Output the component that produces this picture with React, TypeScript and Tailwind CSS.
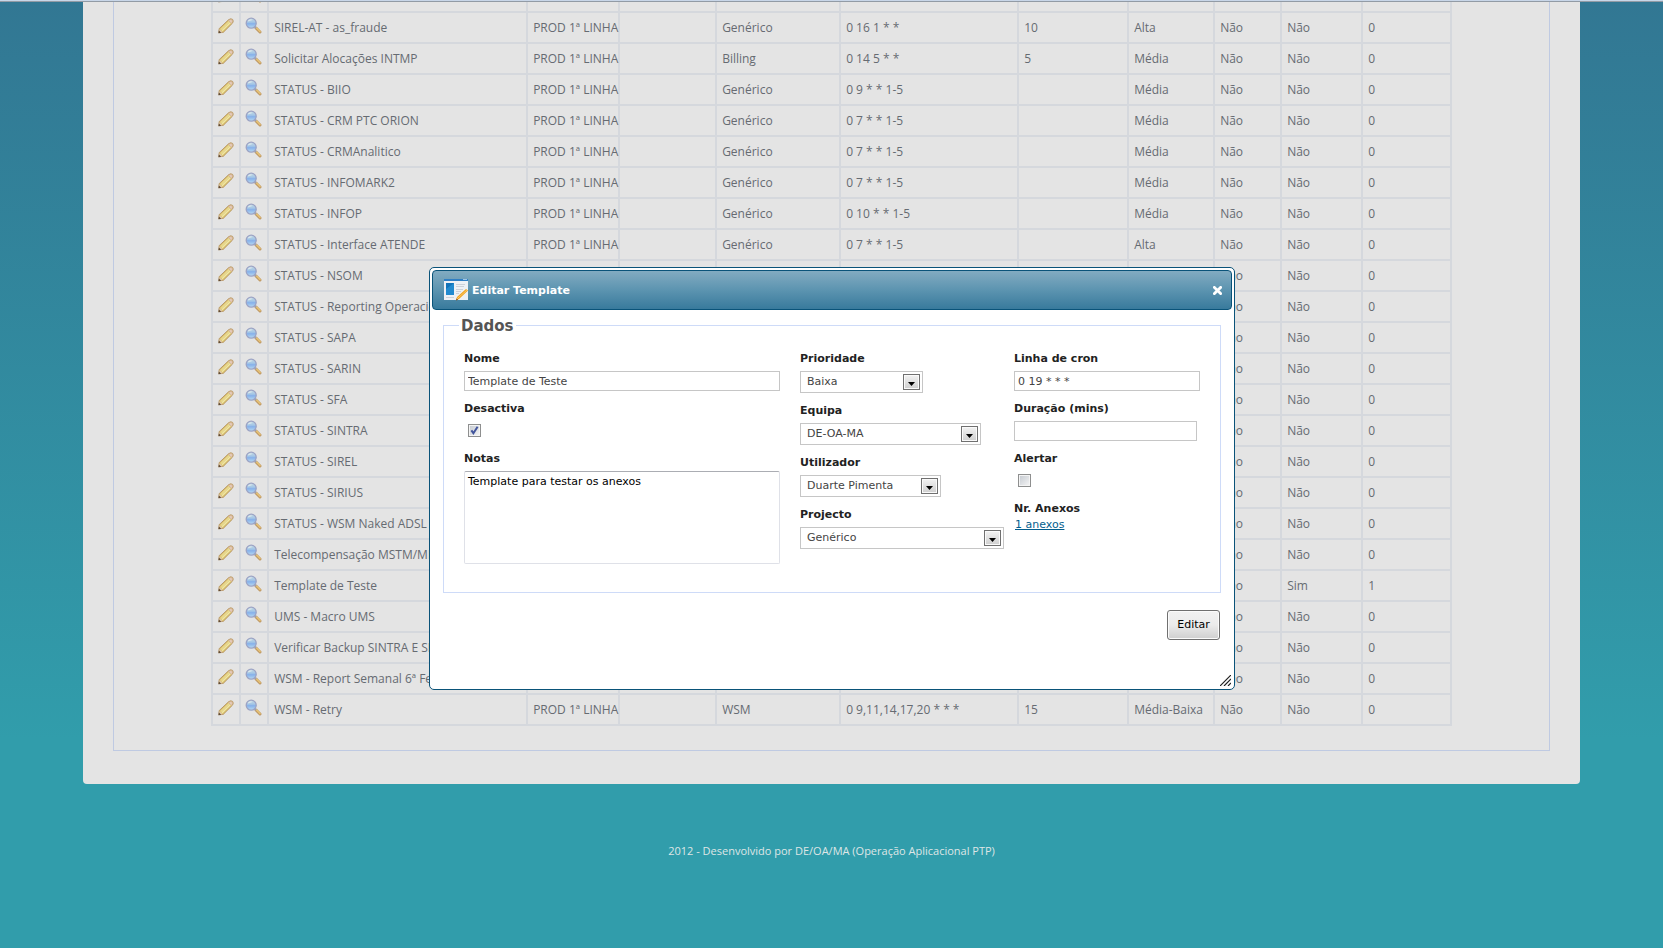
import { useState, type ReactNode } from 'react'

type Row = {
  name: string
  team: string
  project: string
  cron: string
  duration: string
  priority: string
  disabled: string
  alert: string
  attachments: string
}

const TEAM = 'PROD 1ª LINHA'

function row(name: string, project = '', cron = '', priority = '', duration = '', alert = 'Não', attachments = '0'): Row {
  return { name, team: TEAM, project, cron, duration, priority, disabled: 'Não', alert, attachments }
}

const rows: Row[] = [
  row('SIREL-AT - as_fraude', 'Genérico', '0 16 1 * *', 'Alta', '10'),
  row('Solicitar Alocações INTMP', 'Billing', '0 14 5 * *', 'Média', '5'),
  row('STATUS - BIIO', 'Genérico', '0 9 * * 1-5', 'Média'),
  row('STATUS - CRM PTC ORION', 'Genérico', '0 7 * * 1-5', 'Média'),
  row('STATUS - CRMAnalitico', 'Genérico', '0 7 * * 1-5', 'Média'),
  row('STATUS - INFOMARK2', 'Genérico', '0 7 * * 1-5', 'Média'),
  row('STATUS - INFOP', 'Genérico', '0 10 * * 1-5', 'Média'),
  row('STATUS - Interface ATENDE', 'Genérico', '0 7 * * 1-5', 'Alta'),
  row('STATUS - NSOM'),
  row('STATUS - Reporting Operacional'),
  row('STATUS - SAPA'),
  row('STATUS - SARIN'),
  row('STATUS - SFA'),
  row('STATUS - SINTRA'),
  row('STATUS - SIREL'),
  row('STATUS - SIRIUS'),
  row('STATUS - WSM Naked ADSL'),
  row('Telecompensação MSTM/ME'),
  row('Template de Teste', 'Genérico', '0 19 * * *', 'Baixa', '', 'Sim', '1'),
  row('UMS - Macro UMS'),
  row('Verificar Backup SINTRA E SI'),
  row('WSM - Report Semanal 6ª Feira'),
  row('WSM - Retry', 'WSM', '0 9,11,14,17,20 * * *', 'Média-Baixa', '15'),
]

function PencilIcon() {
  return (
    <svg width="16" height="16" viewBox="0 0 16 16" aria-hidden="true">
      <path d="M0.8 14.8 1.2 10.6 10.8 1.6Q12.8 0.2 14.6 1.4Q15.8 3 14.6 5L5.2 14.4Z" fill="#dcc46c" stroke="#b8986a" strokeWidth="1" />
      <path d="M2.8 11.6 12 2.8" stroke="#e9da96" strokeWidth="1.2" />
      <path d="M4 12.8 13 4" stroke="#efe7a8" strokeWidth="1.2" />
      <path d="M10.4 2.4Q12.8 0.8 14.2 1.8Q15.2 3.2 13.6 5.6Z" fill="#e3c9b8" stroke="#cda98a" strokeWidth="0.6" />
      <path d="M1 14.6 1.6 11.2 4.8 14.2Z" fill="#e0c8ae" />
      <path d="M0.4 15.2 0.9 12.4 3.2 14.8Z" fill="#5f4a36" />
    </svg>
  )
}

function MagnifierIcon() {
  return (
    <svg width="17" height="17" viewBox="0 0 17 17" aria-hidden="true">
      <defs>
        <linearGradient id="lens" x1="0" y1="0" x2="0" y2="1">
          <stop offset="0" stopColor="#c4d8e2" />
          <stop offset="0.4" stopColor="#a3c6e6" />
          <stop offset="0.55" stopColor="#86b0ea" />
          <stop offset="1" stopColor="#b8dcf2" />
        </linearGradient>
      </defs>
      <path d="M11 11 15 15" stroke="#c09a66" strokeWidth="3" strokeLinecap="round" />
      <path d="M11.4 10.8 15 14.4" stroke="#e8c474" strokeWidth="1.4" strokeLinecap="round" />
      <path d="M9.4 9.4 11 11" stroke="#9aa0b0" strokeWidth="2" />
      <circle cx="6.2" cy="6.2" r="5" fill="url(#lens)" stroke="#9ca3c4" strokeWidth="1.3" />
      <path d="M3.2 4.2Q4.6 2.6 6.6 2.8" fill="none" stroke="#dde8ec" strokeWidth="1.2" />
    </svg>
  )
}

function TemplateIcon() {
  return (
    <svg width="24" height="22" viewBox="0 0 24 22" aria-hidden="true">
      <rect width="24" height="21" fill="#eef1f5" />
      <rect width="24" height="2" fill="#2f7fc4" />
      <rect x="19" y="0" width="4" height="1" fill="#9cc6ea" />
      <rect x="2" y="4" width="8" height="12" fill="#1273b8" />
      <path d="M2 16V10L10 4V16Z" fill="#2b9ade" opacity="0.6" />
      <path d="M12 5.5H21M12 7.5H20M12 10.5H19M12 12.5H17M12 14.5H15M2 18.5H10" stroke="#cdd2d9" />
      <path d="M12 21 13 18 22 10 24 11.6 15 20Z" fill="#f2a21c" />
      <path d="M12.6 20.2 23 11" stroke="#fbd27a" strokeWidth="0.8" />
      <path d="M12 21.6 12.6 19.4 14.2 20.8Z" fill="#8a4b10" />
    </svg>
  )
}

function Cell({ children }: { children?: ReactNode }) {
  return <td className="h-[31px] border-2 border-[#d5d8dd] px-[5px] py-0 whitespace-nowrap">{children}</td>
}

function IconCells({ name }: { name: string }) {
  return (
    <>
      <td className="h-[31px] border-2 border-[#d5d8dd] p-0 pb-1 pl-[5px]">
        <button type="button" aria-label={`Editar ${name}`} className="block cursor-pointer">
          <PencilIcon />
        </button>
      </td>
      <td className="h-[31px] border-2 border-[#d5d8dd] p-0 pb-1 pl-1">
        <button type="button" aria-label={`Ver ${name}`} className="block cursor-pointer">
          <MagnifierIcon />
        </button>
      </td>
    </>
  )
}

function TemplatesTable() {
  return (
    <table className="-mt-[22px] w-full table-fixed border-collapse text-xs text-[#666b72]">
      <colgroup>
        <col className="w-[28px]" />
        <col className="w-[28px]" />
        <col className="w-[259px]" />
        <col className="w-[92px]" />
        <col className="w-[97px]" />
        <col className="w-[124px]" />
        <col className="w-[178px]" />
        <col className="w-[110px]" />
        <col className="w-[86px]" />
        <col className="w-[67px]" />
        <col className="w-[81px]" />
        <col />
      </colgroup>
      <tbody>
        <tr>
          <IconCells name="template" />
          <Cell />
          <Cell />
          <Cell />
          <Cell />
          <Cell />
          <Cell />
          <Cell />
          <Cell />
          <Cell />
          <Cell />
        </tr>
        {rows.map((r) => (
          <tr key={r.name}>
            <IconCells name={r.name} />
            <Cell>{r.name}</Cell>
            <Cell>{r.team}</Cell>
            <Cell />
            <Cell>{r.project}</Cell>
            <Cell>{r.cron}</Cell>
            <Cell>{r.duration}</Cell>
            <Cell>{r.priority}</Cell>
            <Cell>{r.disabled}</Cell>
            <Cell>{r.alert}</Cell>
            <Cell>{r.attachments}</Cell>
          </tr>
        ))}
      </tbody>
    </table>
  )
}

function Label({ htmlFor, children }: { htmlFor: string; children: ReactNode }) {
  return (
    <label htmlFor={htmlFor} className="block h-4 leading-[18px] font-bold text-[#222]">
      {children}
    </label>
  )
}

function TextField({ id, label, value, width }: { id: string; label: string; value: string; width: string }) {
  return (
    <div>
      <Label htmlFor={id}>{label}</Label>
      <input
        id={id}
        type="text"
        defaultValue={value}
        className={`mt-[5px] block h-5 border border-[#c6c6c6] bg-white px-[3px] text-[#444] outline-none ${width}`}
      />
    </div>
  )
}

function SelectField({ id, label, value, width }: { id: string; label: string; value: string; width: string }) {
  return (
    <div>
      <Label htmlFor={id}>{label}</Label>
      <div className={`relative mt-[5px] ${width}`}>
        <select
          id={id}
          defaultValue={value}
          className="block h-[22px] w-full appearance-none border border-[#c6c6c6] bg-white pt-px pl-[6px] text-[#444] outline-none"
        >
          <option>{value}</option>
        </select>
        <span className="pointer-events-none absolute top-[3px] right-[3px] flex h-4 w-[17px] items-end justify-center border border-[#707070] bg-linear-to-b from-[#f2f2f2] to-[#cfcfcf] pb-[3px] shadow-[inset_0_0_0_1px_#fafafa]">
          <svg width="7" height="4" viewBox="0 0 7 4" aria-hidden="true">
            <path d="M0 0H7L3.5 4Z" fill="#000" />
          </svg>
        </span>
      </div>
    </div>
  )
}

function CheckField({ id, label, initial }: { id: string; label: string; initial: boolean }) {
  const [checked, setChecked] = useState(initial)

  return (
    <div>
      <Label htmlFor={id}>{label}</Label>
      <div className="relative mt-2 mb-1 ml-1 size-[13px]">
        <input
          id={id}
          type="checkbox"
          checked={checked}
          onChange={(e) => setChecked(e.target.checked)}
          className="block size-[13px] appearance-none border border-[#8e8f8f] bg-linear-to-br from-[#c4c9d0] to-[#f6f6f6] shadow-[inset_0_0_0_1px_#f4f4f4]"
        />
        {checked && (
          <svg className="pointer-events-none absolute top-0 left-0" width="13" height="13" viewBox="0 0 13 13" aria-hidden="true">
            <path d="M3.4 6.4 5.4 9.2 9.6 2.8" fill="none" stroke="#42559c" strokeWidth="2" />
          </svg>
        )}
      </div>
    </div>
  )
}

function EditDialog() {
  const [open, setOpen] = useState(true)

  if (!open) return null

  return (
    <div className="absolute inset-0 flex items-start justify-center pt-[267px] pl-px font-['DejaVu_Sans',Verdana,sans-serif] text-[11px]">
      <div role="dialog" aria-labelledby="dialog-title" className="relative w-[806px] rounded-[5px] border border-[#0a5379] bg-white p-[2px]">
        <div className="flex h-10 items-center rounded-[4px] border border-[#0a5379] bg-linear-to-b from-[#82abc1] via-[#5c94b0] to-[#387a9c] pr-[9px] pl-[11px]">
          <TemplateIcon />
          <h2 id="dialog-title" className="ml-1 flex-1 pt-[2px] leading-4 font-bold text-white">
            Editar Template
          </h2>
          <button type="button" aria-label="Fechar" onClick={() => setOpen(false)} className="cursor-pointer">
            <svg width="9" height="9" viewBox="0 0 9 9" aria-hidden="true">
              <path d="M1.4 1.4 7.6 7.6M7.6 1.4 1.4 7.6" stroke="#fff" strokeWidth="2.8" strokeLinecap="square" />
            </svg>
          </button>
        </div>

        <form className="px-[11px] pt-[5px] pb-[47px]" onSubmit={(e) => e.preventDefault()}>
          <fieldset className="border border-[#cedbf8] pb-7 pl-5">
            <legend className="-ml-[5px] h-5 px-[2px] text-[15px] leading-[22px] font-bold text-[#555]">Dados</legend>
            <div className="flex pt-[15px]">
              <div className="mr-5 flex w-[316px] flex-col gap-[9px]">
                <TextField id="nome" label="Nome" value="Template de Teste" width="w-full" />
                <CheckField id="desactiva" label="Desactiva" initial />
                <div>
                  <Label htmlFor="notas">Notas</Label>
                  <textarea
                    id="notas"
                    defaultValue="Template para testar os anexos"
                    className="mt-[5px] block h-[93px] w-full resize-none rounded-[2px] border border-[#dfe1e8] border-t-[#abadb3] bg-white px-[3px] py-[2px] leading-4 text-black outline-none"
                  />
                </div>
              </div>

              <div className="mr-[10px] flex w-[204px] flex-col gap-[9px]">
                <SelectField id="prioridade" label="Prioridade" value="Baixa" width="w-[123px]" />
                <SelectField id="equipa" label="Equipa" value="DE-OA-MA" width="w-[181px]" />
                <SelectField id="utilizador" label="Utilizador" value="Duarte Pimenta" width="w-[141px]" />
                <SelectField id="projecto" label="Projecto" value="Genérico" width="w-full" />
              </div>

              <div className="flex flex-col gap-[9px]">
                <TextField id="cron" label="Linha de cron" value="0 19 * * *" width="w-[186px]" />
                <TextField id="duracao" label="Duração (mins)" value="" width="w-[183px]" />
                <CheckField id="alertar" label="Alertar" initial={false} />
                <div className="pt-px leading-4">
                  <div className="font-bold text-[#222]">Nr. Anexos</div>
                  <a href="#anexos" className="ml-px text-[#045e8e] underline">
                    1 anexos
                  </a>
                </div>
              </div>
            </div>
          </fieldset>
          <div className="mt-[17px] mr-px flex justify-end">
            <button
              type="submit"
              className="h-[30px] w-[53px] cursor-pointer rounded-[3px] border border-[#707070] bg-linear-to-b from-[#f2f2f2] from-0% via-[#ebebeb] via-50% to-[#cfcfcf] pt-px text-black shadow-[inset_0_0_0_1px_#fbfbfb]"
            >
              Editar
            </button>
          </div>
        </form>

        {/* resize handle */}
        <svg className="absolute right-[3px] bottom-[3px] cursor-se-resize" width="11" height="11" viewBox="0 0 11 11" aria-hidden="true">
          <path d="M0 11 11 0M4 11 11 4M8 11 11 8" stroke="#222" strokeWidth="1.2" />
        </svg>
      </div>
    </div>
  )
}

export default function App() {
  return (
    <div className="relative min-h-screen bg-[#319dab] bg-[linear-gradient(to_bottom,#327793_0px,#319dab_740px)] font-['Open_Sans','Trebuchet_MS',sans-serif]">
      <div className="h-[2px] border-b border-[#929ba5] bg-[#c8d6e8]" />
      <main className="mx-[5%] overflow-hidden rounded-b-[4px] bg-[#e4e4e4] px-[30px] pb-[33px]">
        <div className="border border-t-0 border-[#bfcae2] px-[97px] pb-6">
          <TemplatesTable />
        </div>
      </main>
      <footer className="pt-[59px] pb-10 text-center text-[11px] leading-4 text-[#dfe6e6]">
        2012 - Desenvolvido por DE/OA/MA (Operação Aplicacional PTP)
      </footer>
      <EditDialog />
    </div>
  )
}
